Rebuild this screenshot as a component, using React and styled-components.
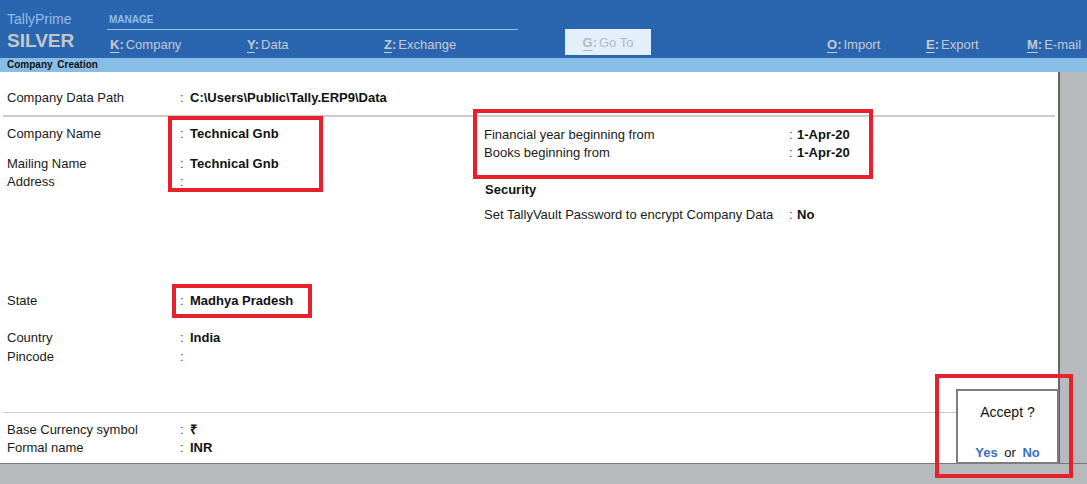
import React from "react"
import styled, { createGlobalStyle } from "styled-components"

const GlobalStyle = createGlobalStyle`
  html, body {
    margin: 0;
    padding: 0;
    background: #ffffff;
    overflow: hidden;
  }
  body {
    font-family: "Liberation Sans", Arial, sans-serif;
    color: #1a1a1a;
  }
`

const Screen = styled.div`
  position: relative;
  width: 1087px;
  height: 484px;
  display: flex;
  flex-direction: column;
  background: #b6babd;
`

const Header = styled.header`
  height: 58px;
  background: #2a66b0;
  display: flex;
`

const Brand = styled.div`
  width: 101px;
  padding-left: 7px;
  display: flex;
  flex-direction: column;
`

const ProductName = styled.div`
  margin-top: 11px;
  font-size: 14px;
  line-height: 16px;
  color: #94bbe4;
`

const Edition = styled.div`
  margin-top: 3px;
  font-size: 19px;
  line-height: 22px;
  font-weight: bold;
  color: #c3c6c9;
`

const MenuArea = styled.div`
  flex: 1;
  display: flex;
  flex-direction: column;
`

const GroupTitle = styled.div`
  width: 409px;
  padding: 14px 0 0 2px;
  height: 15px;
  font-size: 10px;
  line-height: 11px;
  font-weight: bold;
  color: #8ebde9;
  border-bottom: 1px solid #8ec0f0;
`

const MenuRow = styled.nav`
  display: flex;
  align-items: center;
  height: 28px;
`

const MenuItem = styled.div`
  width: ${(p) => p.$width}px;
  margin-left: ${(p) => p.$ml || 0}px;
  flex-shrink: 0;
  font-size: 13px;
  color: #c5c9cd;
  white-space: nowrap;
  padding-top: 1px;
`

const Key = styled.span`
  font-weight: bold;
  margin-right: 2px;

  u {
    text-decoration: underline;
    text-underline-offset: 3px;
  }
`

const GoToBox = styled.div`
  width: 86px;
  height: 26px;
  margin-left: ${(p) => p.$ml}px;
  margin-right: 176px;
  margin-top: -4px;
  flex-shrink: 0;
  background: #e3effb;
  color: #b5b9bd;
  font-size: 13px;
  display: flex;
  align-items: center;
  justify-content: center;
`

const SubBar = styled.div`
  height: 14px;
  background: #88bde6;
  padding-left: 7px;
  font-size: 10px;
  line-height: 14px;
  font-weight: bold;
  color: #111;
  word-spacing: 2px;
`

const Main = styled.div`
  display: flex;
  height: 391px;
`

const Content = styled.main`
  flex: 1;
  background: #ffffff;
  display: flex;
  flex-direction: column;
  padding-top: 17px;
`

const SideStrip = styled.div`
  width: 27px;
  border-left: 2px solid #666;
  background: #b6babd;
`

const Footer = styled.div`
  flex: 1;
  border-top: 1px solid #777;
  background: #b6babd;
`

const Rule = styled.hr`
  margin: ${(p) => p.$mt}px 3px 0 3px;
  border: 0;
  height: ${(p) => p.$h}px;
  background: #cbcbcb;
`

const Middle = styled.section`
  flex: 1;
  display: flex;
`

const Column = styled.div`
  width: ${(p) => (p.$width ? `${p.$width}px` : "auto")};
  padding-top: ${(p) => p.$pt}px;
  display: flex;
  flex-direction: column;
`

const Bottom = styled.section`
  padding: 8px 0 6px;
`

const Row = styled.div`
  display: flex;
  height: 18px;
  line-height: 18px;
  font-size: 13px;
  margin-top: ${(p) => p.$mt || 0}px;
  padding-left: ${(p) => (p.$indent === undefined ? 7 : p.$indent)}px;
`

const Label = styled.span`
  width: ${(p) => p.$width}px;
  flex-shrink: 0;
  color: #1a1a1a;
`

const Colon = styled.span`
  width: ${(p) => p.$width}px;
  flex-shrink: 0;
  padding-left: 1px;
  box-sizing: border-box;
  color: #444;
`

const Value = styled.span`
  font-weight: bold;
  color: #111;
`

const Heading = styled.div`
  font-size: 13px;
  line-height: 18px;
  font-weight: bold;
  color: #111;
  margin-top: ${(p) => p.$mt}px;
  padding-left: 1px;
`

const Highlight = styled.div`
  position: absolute;
  left: ${(p) => p.$x}px;
  top: ${(p) => p.$y}px;
  width: ${(p) => p.$w}px;
  height: ${(p) => p.$h}px;
  box-sizing: border-box;
  border: 4px solid #e8202a;
  pointer-events: none;
  z-index: 5;
`

const Dialog = styled.div`
  position: absolute;
  left: 956px;
  top: 389px;
  width: 103px;
  height: 75px;
  box-sizing: border-box;
  background: #ffffff;
  border: 2px solid #7d7d7d;
  display: flex;
  flex-direction: column;
  align-items: center;
  z-index: 4;
`

const Question = styled.div`
  margin-top: 13px;
  font-size: 14px;
  color: #111;
`

const Answers = styled.div`
  margin-top: 25px;
  font-size: 13px;
  color: #111;
  word-spacing: 3px;
`

const Choice = styled.span`
  color: #3a6fc0;
  font-weight: bold;
`

const Field = ({ label, value, mt, labelWidth = 172, colonWidth = 11, indent }) => (
  <Row $mt={mt} $indent={indent}>
    <Label $width={labelWidth}>{label}</Label>
    <Colon $width={colonWidth}>:</Colon>
    {value && <Value>{value}</Value>}
  </Row>
)

const Shortcut = ({ k }) => (
  <Key>
    <u>{k}</u>:
  </Key>
)

const menuLeft = [
  { k: "K", label: "Company", width: 137, ml: 3 },
  { k: "Y", label: "Data", width: 137 },
  { k: "Z", label: "Exchange", width: 137 },
]

const menuRight = [
  { k: "O", label: "Import", width: 99 },
  { k: "E", label: "Export", width: 101 },
  { k: "M", label: "E-mail", width: 60 },
]

export default function App() {
  return (
    <>
      <GlobalStyle />
      <Screen>
        <Header>
          <Brand>
            <ProductName>TallyPrime</ProductName>
            <Edition>SILVER</Edition>
          </Brand>
          <MenuArea>
            <GroupTitle>MANAGE</GroupTitle>
            <MenuRow>
              {menuLeft.map((m) => (
                <MenuItem key={m.k} $width={m.width} $ml={m.ml}>
                  <Shortcut k={m.k} />
                  {m.label}
                </MenuItem>
              ))}
              <GoToBox $ml={44}>
                <Shortcut k="G" />
                Go To
              </GoToBox>
              {menuRight.map((m) => (
                <MenuItem key={m.k} $width={m.width}>
                  <Shortcut k={m.k} />
                  {m.label}
                </MenuItem>
              ))}
            </MenuRow>
          </MenuArea>
        </Header>

        <SubBar>Company Creation</SubBar>

        <Main>
          <Content>
            <Field label="Company Data Path" value={"C:\\Users\\Public\\Tally.ERP9\\Data"} />
            <Rule $mt={8} $h={2} />
            <Middle>
              <Column $width={484} $pt={8}>
                <Field label="Company Name" value="Technical Gnb" />
                <Field label="Mailing Name" value="Technical Gnb" mt={12} />
                <Field label="Address" />
                <Field label="State" value="Madhya Pradesh" mt={101} />
                <Field label="Country" value="India" mt={19} />
                <Field label="Pincode" mt={1} />
              </Column>
              <Column $pt={9}>
                <Field label="Financial year beginning from" value="1-Apr-20" labelWidth={304} colonWidth={9} indent={0} />
                <Field label="Books beginning from" value="1-Apr-20" labelWidth={304} colonWidth={9} indent={0} />
                <Heading $mt={19}>Security</Heading>
                <Field
                  label="Set TallyVault Password to encrypt Company Data"
                  value="No"
                  labelWidth={304}
                  colonWidth={9}
                  indent={0}
                  mt={7}
                />
              </Column>
            </Middle>
            <Rule $mt={0} $h={1} />
            <Bottom>
              <Field label="Base Currency symbol" value="₹" />
              <Field label="Formal name" value="INR" />
            </Bottom>
          </Content>
          <SideStrip />
        </Main>
        <Footer />

        <Dialog>
          <Question>Accept ?</Question>
          <Answers>
            <Choice>Yes</Choice> or <Choice>No</Choice>
          </Answers>
        </Dialog>

        <Highlight $x={168} $y={116} $w={155} $h={76} />
        <Highlight $x={473} $y={109} $w={400} $h={70} />
        <Highlight $x={172} $y={284} $w={140} $h={34} />
        <Highlight $x={935} $y={374} $w={138} $h={104} />
      </Screen>
    </>
  )
}
